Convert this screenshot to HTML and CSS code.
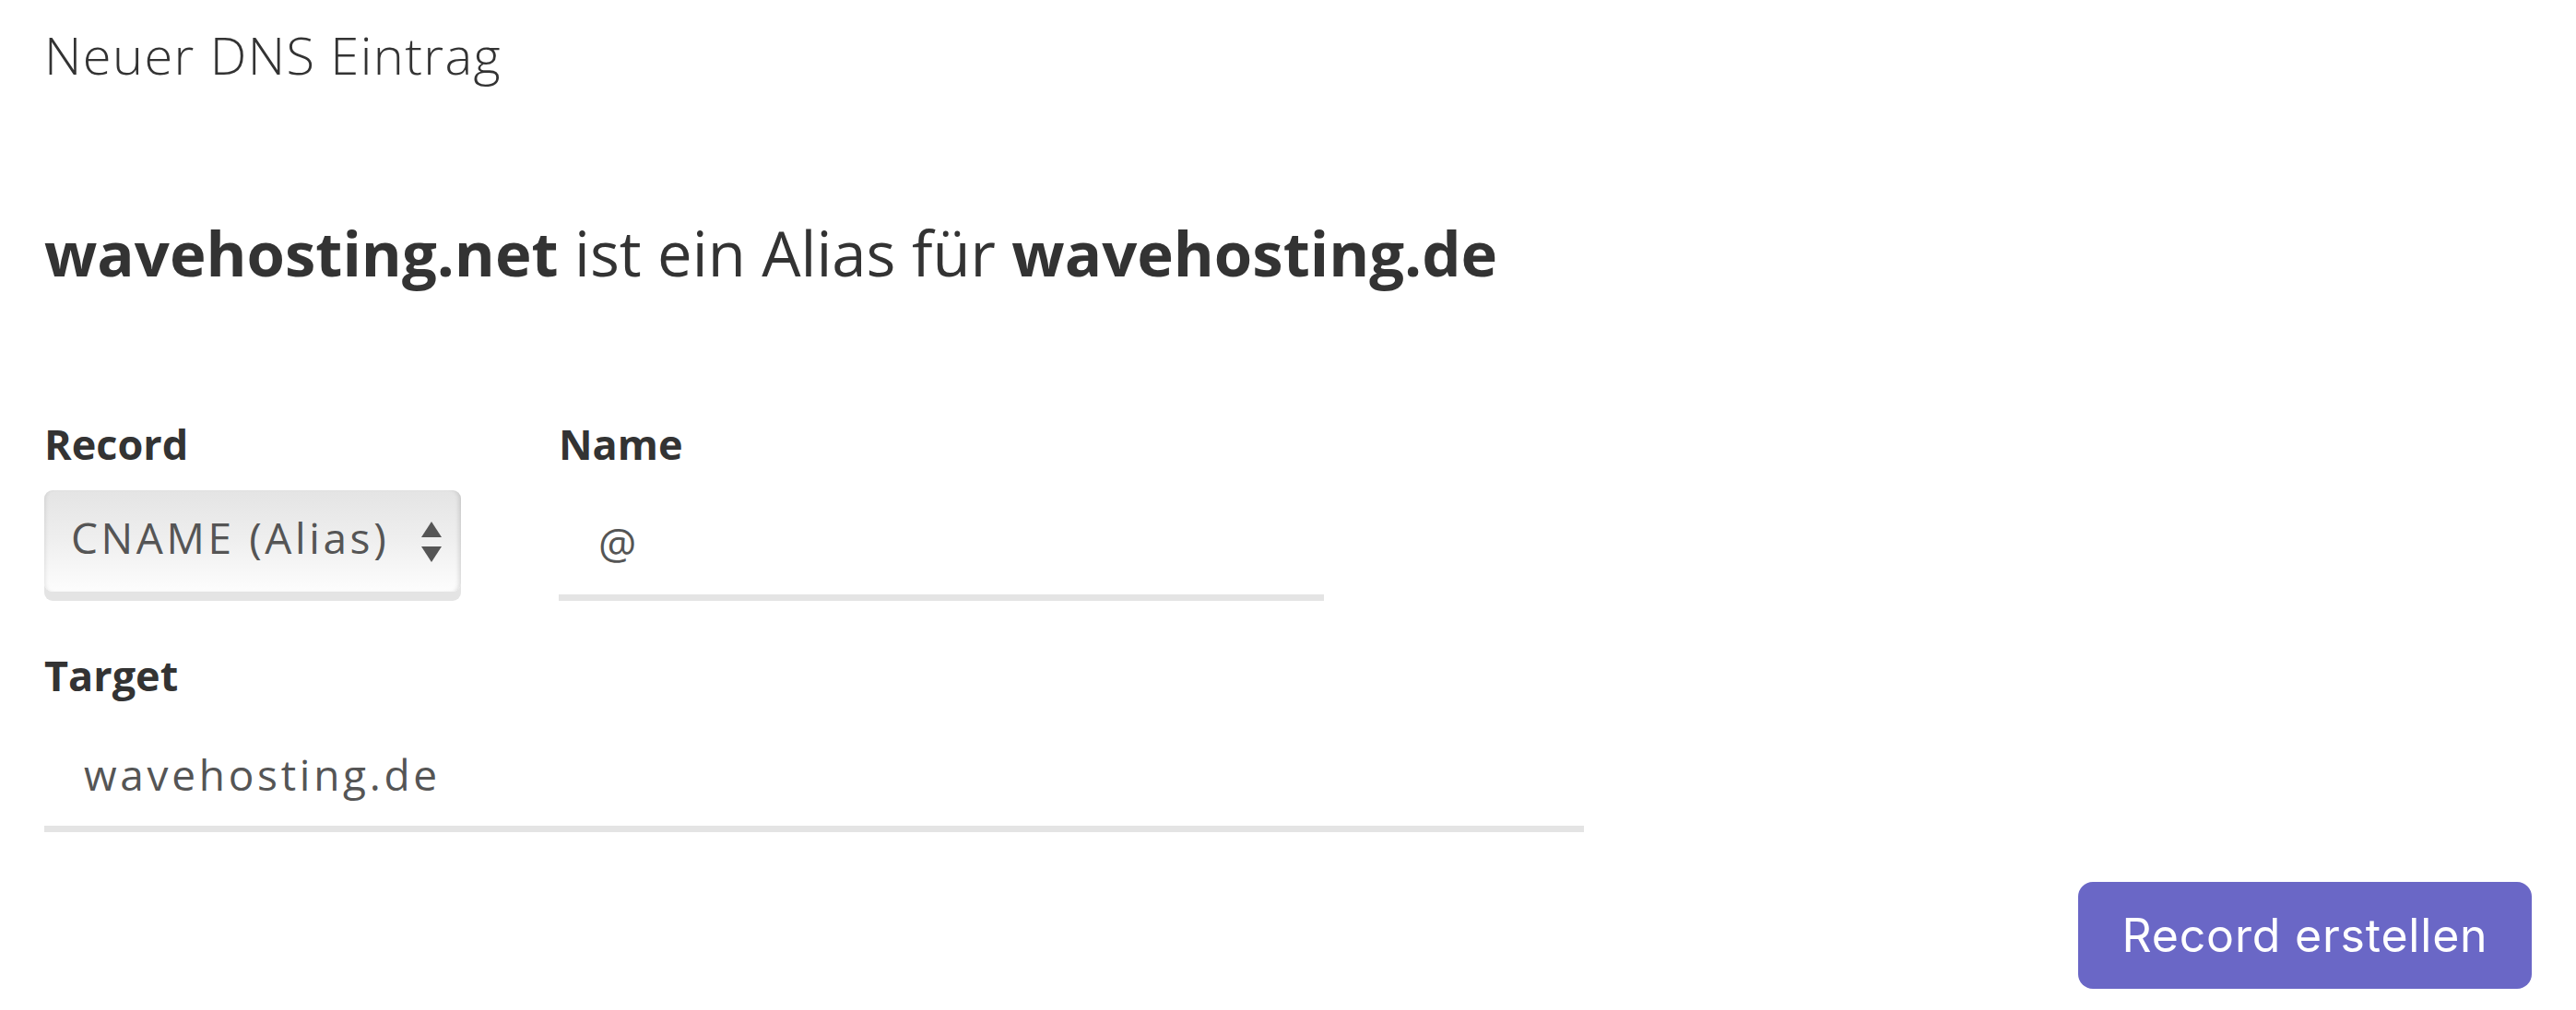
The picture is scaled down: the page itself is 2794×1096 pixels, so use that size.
FILE: index.html
```html
<!DOCTYPE html>
<html lang="de">
<head>
<meta charset="utf-8">
<title>Neuer DNS Eintrag</title>
<link rel="stylesheet" href="styles.css">
</head>
<body>
<main class="page">
  <h1 class="title">Neuer DNS Eintrag</h1>
  <p class="alias"><strong>wavehosting.net</strong> ist ein Alias für <strong>wavehosting.de</strong></p>
  <form class="form">
    <div class="row">
      <div class="field field-record">
        <label class="label" for="record">Record</label>
        <div class="select-wrap">
          <select class="select" id="record"><option>CNAME (Alias)</option></select>
          <svg class="select-arrows" width="22" height="44" viewBox="0 0 22 44" aria-hidden="true">
            <polygon points="11,0 22,17 0,17" fill="#555"/>
            <polygon points="0,27 22,27 11,44" fill="#555"/>
          </svg>
        </div>
      </div>
      <div class="field field-name">
        <label class="label" for="name">Name</label>
        <input class="input" id="name" type="text" value="@">
      </div>
    </div>
    <div class="field field-target">
      <label class="label" for="target">Target</label>
      <input class="input" id="target" type="text" value="wavehosting.de">
    </div>
    <div class="actions">
      <button class="btn" type="button">Record erstellen</button>
    </div>
  </form>
</main>
</body>
</html>
```

FILE: styles.css
```css
html, body {
  margin: 0;
  padding: 0;
  background: #fff;
}
body {
  font-family: "Open Sans", sans-serif;
  color: #333;
}
.page {
  padding: 0 48px;
}
.title {
  margin: 25px 0 0;
  font-size: 56px;
  line-height: 68px;
  font-weight: 300;
  color: #333;
  letter-spacing: 1.4px;
}
.alias {
  margin: 141px 0 0;
  font-size: 67px;
  line-height: 80px;
  font-weight: 400;
  color: #333;
}
.alias strong {
  font-weight: 700;
}
.form {
  margin-top: 141px;
}
.row {
  display: flex;
  align-items: flex-start;
  gap: 106px;
}
.field {
  display: flex;
  flex-direction: column;
  gap: 23px;
}
.label {
  font-size: 45px;
  line-height: 54px;
  font-weight: 700;
  color: #333;
}
.select-wrap {
  position: relative;
  width: 452px;
  height: 110px;
}
.select {
  appearance: none;
  -webkit-appearance: none;
  display: block;
  width: 100%;
  height: 110px;
  margin: 0;
  border: 0;
  border-radius: 9px;
  padding: 0 0 9px 29px;
  font-family: "Open Sans", sans-serif;
  font-size: 46px;
  font-weight: 400;
  letter-spacing: 3.6px;
  color: #555;
  background: linear-gradient(#e4e4e4, #efefef 50%, #fdfdfd);
  box-shadow: 0 10px 0 #e4e4e4,
    inset 4px 0 4px -3px rgba(0, 0, 0, 0.10),
    inset -5px 0 5px -3px rgba(0, 0, 0, 0.14);
  outline: none;
}
.select-arrows {
  position: absolute;
  top: 34px;
  right: 21px;
}
.input {
  display: block;
  box-sizing: border-box;
  height: 120px;
  margin: 0;
  border: 0;
  border-bottom: 7px solid #e4e4e4;
  padding: 0 0 0 43px;
  font-family: "Open Sans", sans-serif;
  font-size: 46px;
  letter-spacing: 3.7px;
  color: #555;
  background: transparent;
  outline: none;
}
.field-name .input {
  width: 830px;
}
.field-target {
  margin-top: 54px;
}
.field-target .input {
  width: 1670px;
}
.actions {
  display: flex;
  justify-content: flex-end;
  margin-top: 54px;
}
.btn {
  font-family: "Inter", sans-serif;
  font-size: 50px;
  font-weight: 400;
  letter-spacing: 0.8px;
  color: #fff;
  background: #6a67c6;
  border: 0;
  border-radius: 16px;
  width: 492px;
  height: 116px;
  padding: 0;
}
```
